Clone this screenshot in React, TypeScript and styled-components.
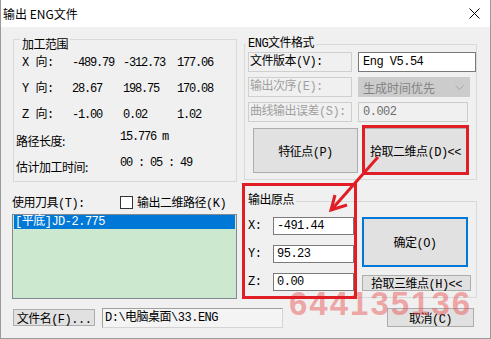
import React from 'react';
import styled, { createGlobalStyle } from 'styled-components';

const song = `"Liberation Mono", "Noto Sans CJK SC", monospace`;
const hei = `"Noto Sans CJK SC", "Noto Sans", sans-serif`;

const GlobalStyle = createGlobalStyle`
  html, body {
    margin: 0;
    padding: 0;
    background: #ffffff;
  }
  * {
    box-sizing: border-box;
  }
`;

const Window = styled.div`
  position: relative;
  width: 491px;
  height: 339px;
  display: flex;
  flex-direction: column;
  background: #f0f0f0;
  border: 1px solid #9a9a9a;
  border-top: none;
  font-family: ${song};
  font-size: 12px;
  letter-spacing: -0.5px;
  color: #000;
  overflow: hidden;
`;

const TitleBar = styled.div`
  height: 27px;
  flex: none;
  display: flex;
  align-items: center;
  justify-content: space-between;
  padding: 0 10px 0 2px;
  background: #ffffff;
  font-family: ${hei};
  letter-spacing: 0;
`;

const Body = styled.div`
  display: flex;
  flex-direction: column;
  padding: 12px 13px 0 11px;
`;

const MainGrid = styled.div`
  display: grid;
  grid-template-columns: 225px 233px;
  column-gap: 7px;
  align-items: start;
`;

const Column = styled.div`
  display: flex;
  flex-direction: column;
`;

const Group = styled.div<{ $top?: number; $left?: number; $bottom?: number }>`
  display: flex;
  flex-direction: column;
  margin: ${(p) => p.$top ?? 0}px 0 0 ${(p) => p.$left ?? 0}px;
  padding-bottom: ${(p) => p.$bottom ?? 0}px;
  border: 1px solid #d9d9d9;
`;

const Legend = styled.div<{ $lift: number; $indent: number; $soft?: boolean }>`
  align-self: flex-start;
  margin: -${(p) => p.$lift}px 0 0 ${(p) => p.$indent}px;
  padding: 0 2px;
  line-height: 14px;
  background: #f0f0f0;
  white-space: nowrap;
  font-family: ${(p) => (p.$soft ? hei : song)};
`;

const RangeRows = styled.div`
  display: flex;
  flex-direction: column;
  margin-top: -1px;
`;

const CoordRow = styled.div`
  display: grid;
  grid-template-columns: 50px 51px 54px auto;
  height: 26px;
  line-height: 26px;
  padding-left: 8px;
`;

const Num = styled.span`
  letter-spacing: -1.2px;
`;

const SummaryRow = styled.div`
  display: grid;
  grid-template-columns: 104px auto;
  height: 26px;
  padding-left: 2px;
`;

const SummaryLabel = styled.span`
  line-height: 26px;
  font-family: ${hei};
`;

const SummaryValue = styled(Num)`
  line-height: 18px;
`;

const ToolRow = styled.div`
  display: grid;
  grid-template-columns: 108px auto;
  align-items: center;
  height: 13px;
  margin-top: 11px;
  white-space: nowrap;
`;

const CheckLabel = styled.label`
  display: flex;
  align-items: center;
  gap: 4px;
`;

const CheckBox = styled.span`
  width: 13px;
  height: 13px;
  background: #ffffff;
  border: 1px solid #333333;
`;

const ToolList = styled.div`
  height: 85px;
  margin-top: 8px;
  padding: 0 1px;
  background: #cce8cf;
  border: 1px solid #828790;
`;

const ListItem = styled.div<{ $selected?: boolean }>`
  height: 14px;
  line-height: 14px;
  padding-left: 1px;
  background: ${(p) => (p.$selected ? '#0078d7' : 'transparent')};
  color: ${(p) => (p.$selected ? '#ffffff' : '#000000')};
`;

const FieldRow = styled.div<{ $gap: number }>`
  display: flex;
  align-items: stretch;
  gap: 6px;
  height: 20px;
  margin-top: ${(p) => p.$gap}px;
  padding-left: 3px;
`;

const LabelBox = styled.div<{ $disabled?: boolean }>`
  width: 104px;
  padding-left: 1px;
  line-height: 18px;
  border: 1px solid #cfcfcf;
  color: ${(p) => (p.$disabled ? '#a0a0a0' : '#000000')};
  white-space: nowrap;
`;

const TextField = styled.div<{ $width: number; $disabled?: boolean }>`
  width: ${(p) => p.$width}px;
  padding-left: 4px;
  line-height: 18px;
  background: ${(p) => (p.$disabled ? '#f0f0f0' : '#ffffff')};
  border: 1px solid ${(p) => (p.$disabled ? '#cccccc' : '#7a7a7a')};
  color: ${(p) => (p.$disabled ? '#6d6d6d' : '#000000')};
  white-space: nowrap;
`;

const Combo = styled.div`
  width: 112px;
  display: flex;
  align-items: center;
  justify-content: space-between;
  padding: 0 5px 0 4px;
  background: #cccccc;
  border: 1px solid #cccccc;
  color: #838383;
  font-family: ${hei};
  letter-spacing: 0;
`;

const ButtonRow = styled.div`
  display: flex;
  gap: 5px;
  margin-top: 6px;
  padding-left: 8px;
`;

const Button = styled.div<{ $w: number; $h: number; $default?: boolean; $drop?: number }>`
  width: ${(p) => p.$w}px;
  height: ${(p) => p.$h}px;
  margin-top: ${(p) => p.$drop ?? 0}px;
  display: flex;
  align-items: center;
  justify-content: center;
  background: #e1e1e1;
  border: ${(p) => (p.$default ? '2px solid #0078d7' : '1px solid #adadad')};
  white-space: nowrap;
`;

const OriginContent = styled.div`
  display: flex;
  gap: 8px;
  margin-top: 9px;
  padding-left: 3px;
`;

const AxisGrid = styled.div`
  display: grid;
  grid-template-columns: 25px 81px;
  grid-auto-rows: 18px;
  row-gap: 10px;
  align-items: center;
`;

const AxisInput = styled.div`
  height: 18px;
  padding-left: 3px;
  line-height: 16px;
  background: #ffffff;
  border: 1px solid #7a7a7a;
`;

const OriginButtons = styled.div`
  display: flex;
  flex-direction: column;
  align-items: flex-start;
  gap: 8px;
`;

const BottomRow = styled.div`
  display: flex;
  align-items: flex-start;
  margin-top: 9px;
  padding: 0 3px 0 1px;
`;

const PathField = styled.div`
  width: 181px;
  height: 20px;
  margin-left: 7px;
  padding: 2px 0 0 2px;
  line-height: 14px;
  background: #f4f4f4;
  border: 1px solid #d4d4d4;
  border-top-color: #a0a0a0;
  border-left-color: #a0a0a0;
  white-space: nowrap;
`;

const Spacer = styled.div`
  flex: 1;
`;

const Overlay = styled.svg`
  position: absolute;
  left: -1px;
  top: 0;
  pointer-events: none;
`;

const Watermark = styled.div`
  position: absolute;
  left: 288px;
  top: 286px;
  font-family: "Liberation Sans", Arial, sans-serif;
  font-weight: 700;
  font-size: 33px;
  letter-spacing: 2px;
  line-height: 36px;
  color: rgba(235, 72, 72, 0.45);
  pointer-events: none;
`;

const coords = [
  { axis: 'X 向:', v: ['-489.79', '-312.73', '177.06'] },
  { axis: 'Y 向:', v: ['28.67', '198.75', '170.08'] },
  { axis: 'Z 向:', v: ['-1.00', '0.02', '1.02'] },
];

const axes = [
  { k: 'X:', v: '-491.44' },
  { k: 'Y:', v: '95.23' },
  { k: 'Z:', v: '0.00' },
];

export default function App() {
  return (
    <>
      <GlobalStyle />
      <Window>
        <TitleBar>
          <span>输出 ENG文件</span>
          <svg width="11" height="11" viewBox="0 0 11 11">
            <path d="M0.5 0.5 L10.5 10.5 M10.5 0.5 L0.5 10.5" stroke="#000" strokeWidth="1" />
          </svg>
        </TitleBar>
        <Body>
          <MainGrid>
            <Column>
              <Group $left={1} $bottom={1}>
                <Legend $lift={3} $indent={6} $soft>
                  加工范围
                </Legend>
                <RangeRows>
                  {coords.map((c) => (
                    <CoordRow key={c.axis}>
                      <span>{c.axis}</span>
                      {c.v.map((n) => (
                        <Num key={n}>{n}</Num>
                      ))}
                    </CoordRow>
                  ))}
                  <SummaryRow>
                    <SummaryLabel>路径长度:</SummaryLabel>
                    <SummaryValue>15.776 m</SummaryValue>
                  </SummaryRow>
                  <SummaryRow>
                    <SummaryLabel>估计加工时间:</SummaryLabel>
                    <SummaryValue>00 : 05 : 49</SummaryValue>
                  </SummaryRow>
                </RangeRows>
              </Group>
              <ToolRow>
                <span>使用刀具(T):</span>
                <CheckLabel>
                  <CheckBox />
                  <span>输出二维路径(K)</span>
                </CheckLabel>
              </ToolRow>
              <ToolList>
                <ListItem $selected>[平底]JD-2.775</ListItem>
              </ToolList>
            </Column>

            <Column>
              <Group $top={5} $bottom={6}>
                <Legend $lift={8} $indent={1}>
                  ENG文件格式
                </Legend>
                <FieldRow $gap={1}>
                  <LabelBox>文件版本(V):</LabelBox>
                  <TextField $width={118}>Eng V5.54</TextField>
                </FieldRow>
                <FieldRow $gap={5}>
                  <LabelBox $disabled>输出次序(E):</LabelBox>
                  <Combo>
                    <span>生成时间优先</span>
                    <svg width="9" height="5" viewBox="0 0 9 5">
                      <path d="M0.5 0.5 L4.5 4.5 L8.5 0.5" fill="none" stroke="#a8a8a8" />
                    </svg>
                  </Combo>
                </FieldRow>
                <FieldRow $gap={5}>
                  <LabelBox $disabled>曲线输出误差(S):</LabelBox>
                  <TextField $width={110} $disabled>
                    0.002
                  </TextField>
                </FieldRow>
                <ButtonRow>
                  <Button $w={105} $h={45}>
                    特征点(P)
                  </Button>
                  <Button $w={105} $h={45}>
                    拾取二维点(D)&lt;&lt;
                  </Button>
                </ButtonRow>
              </Group>

              <Group $top={21} $bottom={6}>
                <Legend $lift={8} $indent={1}>
                  输出原点
                </Legend>
                <OriginContent>
                  <AxisGrid>
                    {axes.map((a) => (
                      <React.Fragment key={a.k}>
                        <span>{a.k}</span>
                        <AxisInput>{a.v}</AxisInput>
                      </React.Fragment>
                    ))}
                  </AxisGrid>
                  <OriginButtons>
                    <Button $w={106} $h={50} $default>
                      确定(O)
                    </Button>
                    <Button $w={109} $h={16}>
                      拾取三维点(H)&lt;&lt;
                    </Button>
                  </OriginButtons>
                </OriginContent>
              </Group>
            </Column>
          </MainGrid>

          <BottomRow>
            <Button $w={82} $h={17} $drop={1}>
              文件名(F)...
            </Button>
            <PathField>D:\电脑桌面\33.ENG</PathField>
            <Spacer />
            <Button $w={87} $h={19}>
              取消(C)
            </Button>
          </BottomRow>
        </Body>

        <Watermark>644135136</Watermark>

        <Overlay width="491" height="339" viewBox="0 0 491 339">
          <g fill="none" stroke="#e11d25" strokeWidth="3">
            <rect x="243.5" y="184.5" width="112" height="113" />
            <rect x="363.5" y="126.5" width="104" height="47" />
            <path d="M378 157 L333 208" />
            <path d="M335 195 L331 210 L347 205" strokeLinejoin="miter" />
          </g>
        </Overlay>
      </Window>
    </>
  );
}
